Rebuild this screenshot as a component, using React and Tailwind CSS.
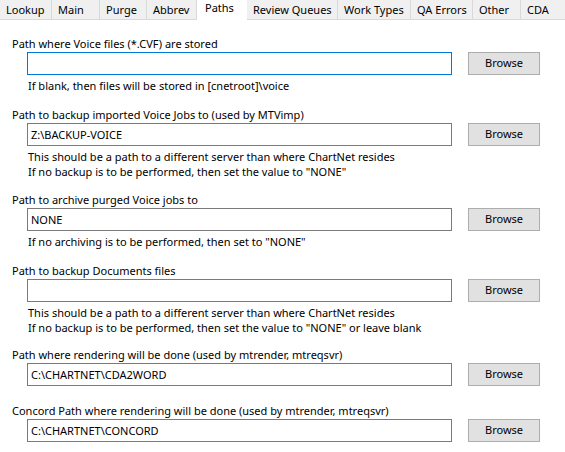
import React from "react";

const tabs = [
  { name: "Lookup", w: "w-[52px]" },
  { name: "Main", w: "w-[48px]" },
  { name: "Purge", w: "w-[47px]" },
  { name: "Abbrev", w: "w-[50px]" },
  { name: "Paths", w: "w-[50px]", active: true },
  { name: "Review Queues", w: "w-[91px]" },
  { name: "Work Types", w: "w-[73px]" },
  { name: "QA Errors", w: "w-[62px]" },
  { name: "Other", w: "w-[48px]" },
  { name: "CDA", w: "w-[50px]" },
];

function Row({ mt, label, value, focused, help }) {
  return (
    <div className={mt}>
      <div className="pl-[12px] leading-[15px] h-[15px] whitespace-nowrap">{label}</div>
      <div className="mt-[1px] flex items-start">
        <div
          className={`ml-[27px] w-[425px] h-[23px] border bg-white flex items-center pl-[3px] leading-[15px] whitespace-nowrap ${
            focused ? "border-[#0078d7]" : "border-[#7a7a7a]"
          }`}
        >
          {value}
        </div>
        <div className="ml-[16px] w-[72px] h-[23px] border border-[#adadad] bg-[#e1e1e1] flex items-center justify-center">
          Browse
        </div>
      </div>
      {help && (
        <div className="mt-[3px] pl-[28px]">
          {help.map((h, i) => (
            <div key={i} className="leading-[15px] h-[15px] whitespace-nowrap">
              {h}
            </div>
          ))}
        </div>
      )}
    </div>
  );
}

export default function App() {
  return (
    <div
      className="w-[565px] h-[452px] bg-white text-black text-[11px] overflow-hidden"
      style={{ fontFamily: '"Noto Sans", "Open Sans", sans-serif' }}
    >
      <div className="relative h-[20px] flex bg-white">
        <div className="absolute left-0 right-0 bottom-0 h-[1px] bg-[#d9d9d9]" />
        {tabs.map((t) =>
          t.active ? (
            <div
              key={t.name}
              className={`${t.w} relative z-10 h-[20px] bg-white pl-[8px] pt-[1px] leading-[14px] whitespace-nowrap shrink-0`}
            >
              {t.name}
            </div>
          ) : (
            <div
              key={t.name}
              className={`${t.w} h-[19px] bg-[#f0f0f0] border-r border-[#d9d9d9] pl-[6px] pt-[2px] leading-[16px] whitespace-nowrap shrink-0`}
            >
              {t.name}
            </div>
          )
        )}
      </div>

      <Row
        mt="mt-[16px]"
        label="Path where Voice files (*.CVF) are stored"
        value=""
        focused
        help={["If blank, then files will be stored in [cnetroot]\\voice"]}
      />
      <Row
        mt="mt-[14px]"
        label="Path to backup imported Voice Jobs to (used by MTVimp)"
        value={"Z:\\BACKUP-VOICE"}
        help={[
          "This should be a path to a different server than where ChartNet resides",
          'If no backup is to be performed, then set the value to "NONE"',
        ]}
      />
      <Row
        mt="mt-[13px]"
        label="Path to archive purged Voice jobs to"
        value="NONE"
        help={['If no archiving is to be performed, then set to "NONE"']}
      />
      <Row
        mt="mt-[14px]"
        label="Path to backup Documents files"
        value=""
        help={[
          "This should be a path to a different server than where ChartNet resides",
          'If no backup is to be performed, then set the value to "NONE" or leave blank',
        ]}
      />
      <Row
        mt="mt-[12px]"
        label="Path where rendering will be done (used by mtrender, mtreqsvr)"
        value={"C:\\CHARTNET\\CDA2WORD"}
      />
      <Row
        mt="mt-[17px]"
        label="Concord Path where rendering will be done (used by mtrender, mtreqsvr)"
        value={"C:\\CHARTNET\\CONCORD"}
      />
    </div>
  );
}
